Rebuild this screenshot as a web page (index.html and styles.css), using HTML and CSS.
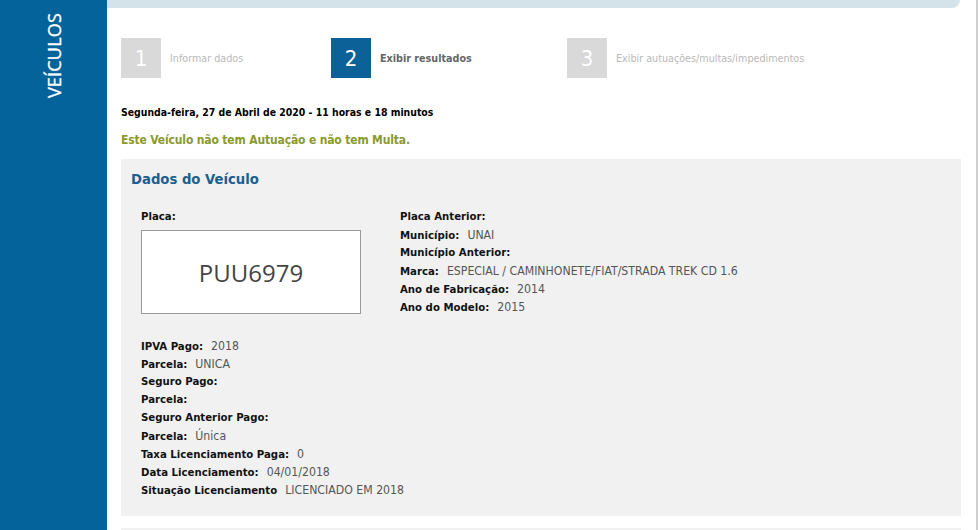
FILE: index.html
```html
<!DOCTYPE html>
<html lang="pt-BR">
<head>
    <meta charset="UTF-8">
    <meta name="viewport" content="width=device-width, initial-scale=1.0">
    <title>Veículos - Consulta</title>
    <link rel="stylesheet" href="styles.css">
</head>
<body>
    <div class="page">
        <aside class="sidebar">
            <span class="sidebar-title">VEÍCULOS</span>
        </aside>
        <main class="content">
            <div class="topbar"></div>
            <div class="inner">
                <ol class="steps">
                    <li class="step step-1"><span class="step-num">1</span><span class="step-label">Informar dados</span></li>
                    <li class="step step-2 active"><span class="step-num">2</span><span class="step-label">Exibir resultados</span></li>
                    <li class="step step-3"><span class="step-num">3</span><span class="step-label">Exibir autuações/multas/impedimentos</span></li>
                </ol>

                <p class="date">Segunda-feira, 27 de Abril de 2020 - 11 horas e 18 minutos</p>
                <p class="notice">Este Veículo não tem Autuação e não tem Multa.</p>

                <section class="panel">
                    <h2 class="panel-title">Dados do Veículo</h2>
                    <div class="panel-body">
                        <div class="panel-top">
                            <div class="plate-col">
                                <div class="row"><b>Placa:</b></div>
                                <div class="plate">PUU6979</div>
                            </div>
                            <ul class="info">
                                <li class="row"><b>Placa Anterior:</b></li>
                                <li class="row"><b>Município:</b><span>UNAI</span></li>
                                <li class="row"><b>Município Anterior:</b></li>
                                <li class="row"><b>Marca:</b><span>ESPECIAL / CAMINHONETE/FIAT/STRADA TREK CD 1.6</span></li>
                                <li class="row"><b>Ano de Fabricação:</b><span>2014</span></li>
                                <li class="row"><b>Ano do Modelo:</b><span>2015</span></li>
                            </ul>
                        </div>
                        <ul class="info info-bottom">
                            <li class="row"><b>IPVA Pago:</b><span>2018</span></li>
                            <li class="row"><b>Parcela:</b><span>UNICA</span></li>
                            <li class="row"><b>Seguro Pago:</b></li>
                            <li class="row"><b>Parcela:</b></li>
                            <li class="row"><b>Seguro Anterior Pago:</b></li>
                            <li class="row"><b>Parcela:</b><span>Única</span></li>
                            <li class="row"><b>Taxa Licenciamento Paga:</b><span>0</span></li>
                            <li class="row"><b>Data Licenciamento:</b><span>04/01/2018</span></li>
                            <li class="row"><b>Situação Licenciamento</b><span>LICENCIADO EM 2018</span></li>
                        </ul>
                    </div>
                </section>

                <section class="panel panel-next"></section>
            </div>
        </main>
    </div>
</body>
</html>
```

FILE: styles.css
```css
* {
    margin: 0;
    padding: 0;
    box-sizing: border-box;
}

html, body {
    height: 100%;
}

body {
    font-family: 'DejaVu Sans Condensed', 'DejaVu Sans', sans-serif;
    font-size: 11px;
    color: #111;
    background: #fff;
    overflow: hidden;
}

.page {
    display: flex;
    height: 100%;
}

/* Barra lateral azul */
.sidebar {
    width: 107px;
    flex-shrink: 0;
    background-color: #03639a;
    display: flex;
    justify-content: center;
}

.sidebar-title {
    writing-mode: vertical-rl;
    transform: rotate(180deg);
    color: #fff;
    font-family: 'Open Sans', sans-serif;
    font-size: 18px;
    line-height: 20px;
    letter-spacing: 0.2px;
    margin-top: 13px;
    align-self: flex-start;
    -webkit-text-stroke: 0.3px #fff;
}

.content {
    flex: 1;
    border-right: 2px solid #cfcfcf;
    min-width: 0;
}

.topbar {
    height: 8px;
    margin-right: 16px;
    background-color: #d4e2e9;
    border-bottom-right-radius: 8px;
}

.inner {
    padding: 0 15px 0 14px;
}

/* Etapas */
.steps {
    list-style: none;
    display: flex;
    margin-top: 30px;
}

.step {
    display: flex;
    align-items: center;
}

.step-1 {
    width: 210px;
}

.step-2 {
    width: 236px;
}

.step-num {
    width: 40px;
    height: 40px;
    background-color: #d9d9d9;
    color: #fff;
    font-family: 'DejaVu Sans Condensed', sans-serif;
    font-size: 22px;
    display: flex;
    justify-content: center;
    align-items: center;
}

.step-label {
    margin-left: 9px;
    font-family: 'DejaVu Sans Condensed', sans-serif;
    font-size: 10.7px;
    color: #b9b9b9;
}

.step.active .step-num {
    background-color: #0c6298;
}

.step.active .step-label {
    color: #666;
    font-weight: bold;
}

.date {
    margin-top: 27px;
    font-size: 10.4px;
    line-height: 14px;
    font-weight: bold;
    color: #000;
}

.notice {
    margin-top: 13px;
    font-size: 12px;
    letter-spacing: -0.15px;
    line-height: 16px;
    font-weight: bold;
    color: #8a9a2b;
}

/* Painel de dados */
.panel {
    background-color: #f1f1f1;
    margin-top: 11px;
    padding: 10px 10px 17px;
}

.panel-title {
    font-size: 14.7px;
    line-height: 20px;
    color: #1b5f8f;
}

.panel-body {
    padding-left: 10px;
    margin-top: 19px;
}

.panel-top {
    display: flex;
}

.plate-col {
    width: 259px;
}

.plate {
    width: 220px;
    height: 84px;
    margin-top: 4px;
    background: #fff;
    border: 1px solid #9a9a9a;
    display: flex;
    justify-content: center;
    align-items: center;
    font-family: 'Open Sans', sans-serif;
    font-size: 24px;
    color: #444;
}

.info {
    list-style: none;
}

.info-bottom {
    margin-top: 21px;
}

.row {
    line-height: 18px;
    height: 18px;
    white-space: nowrap;
    font-size: 11.3px;
}

.row b {
    color: #111;
}

.row span {
    margin-left: 8px;
    font-size: 12.2px;
    color: #555;
}

.panel-next {
    margin-top: 12px;
    height: 2px;
    padding: 0;
}
```
